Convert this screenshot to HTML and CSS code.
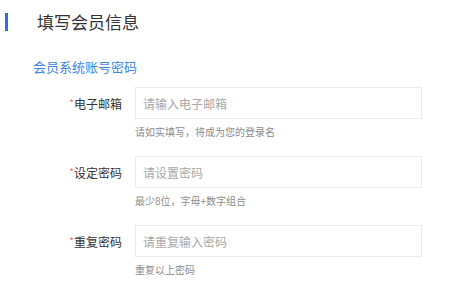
FILE: index.html
```html
<!DOCTYPE html>
<html lang="zh-CN">

<head>
    <meta charset="UTF-8">
    <meta name="viewport" content="width=device-width, initial-scale=1.0">
    <title>填写会员信息</title>
    <link rel="stylesheet" href="styles.css">
</head>

<body>
    <div class="page-head">
        <span class="head-bar"></span>
        <h2>填写会员信息</h2>
    </div>

    <h3 class="section-title">会员系统账号密码</h3>

    <form class="member-form">
        <div class="form-row">
            <label class="form-label"><span class="required">*</span>电子邮箱</label>
            <div class="form-field">
                <input type="text" placeholder="请输入电子邮箱">
                <p class="form-tip">请如实填写，将成为您的登录名</p>
            </div>
        </div>
        <div class="form-row">
            <label class="form-label"><span class="required">*</span>设定密码</label>
            <div class="form-field">
                <input type="password" placeholder="请设置密码">
                <p class="form-tip">最少8位，字母+数字组合</p>
            </div>
        </div>
        <div class="form-row">
            <label class="form-label"><span class="required">*</span>重复密码</label>
            <div class="form-field">
                <input type="password" placeholder="请重复输入密码">
                <p class="form-tip">重复以上密码</p>
            </div>
        </div>
    </form>
</body>

</html>
```

FILE: styles.css
```css
body {
    font-family: "Noto Sans CJK SC", "Noto Sans", sans-serif;
    background-color: #fff;
    color: #333;
    margin: 0;
    padding: 0;
}

.page-head {
    display: flex;
    align-items: center;
    padding-top: 12px;
}

.head-bar {
    width: 3px;
    height: 18px;
    margin-left: 5px;
    background-color: #2d6fd7;
}

.page-head h2 {
    margin: 0 0 0 29px;
    font-size: 17px;
    font-weight: normal;
    line-height: 20px;
    color: #333;
}

.section-title {
    margin: 27px 0 0 33px;
    font-size: 13px;
    font-weight: normal;
    line-height: 16px;
    color: #3d85e6;
}

.member-form {
    margin-top: 12px;
}

.form-row {
    display: flex;
    margin-bottom: 17px;
}

.form-label {
    width: 122px;
    text-align: right;
    font-size: 12px;
    line-height: 31px;
    color: #333;
}

.required {
    color: #f26d6d;
    font-size: 10px;
    vertical-align: 2px;
}

.form-field {
    margin-left: 13px;
}

.form-field input {
    box-sizing: border-box;
    width: 287px;
    height: 32px;
    padding: 0 7px;
    border: 1px solid #ebebeb;
    font-family: inherit;
    font-size: 12px;
    color: #333;
    outline: none;
}

.form-field input::placeholder {
    color: #a8a8a8;
}

.form-tip {
    margin: 6px 0 0;
    font-size: 10px;
    line-height: 14px;
    color: #8c8c8c;
}
```
